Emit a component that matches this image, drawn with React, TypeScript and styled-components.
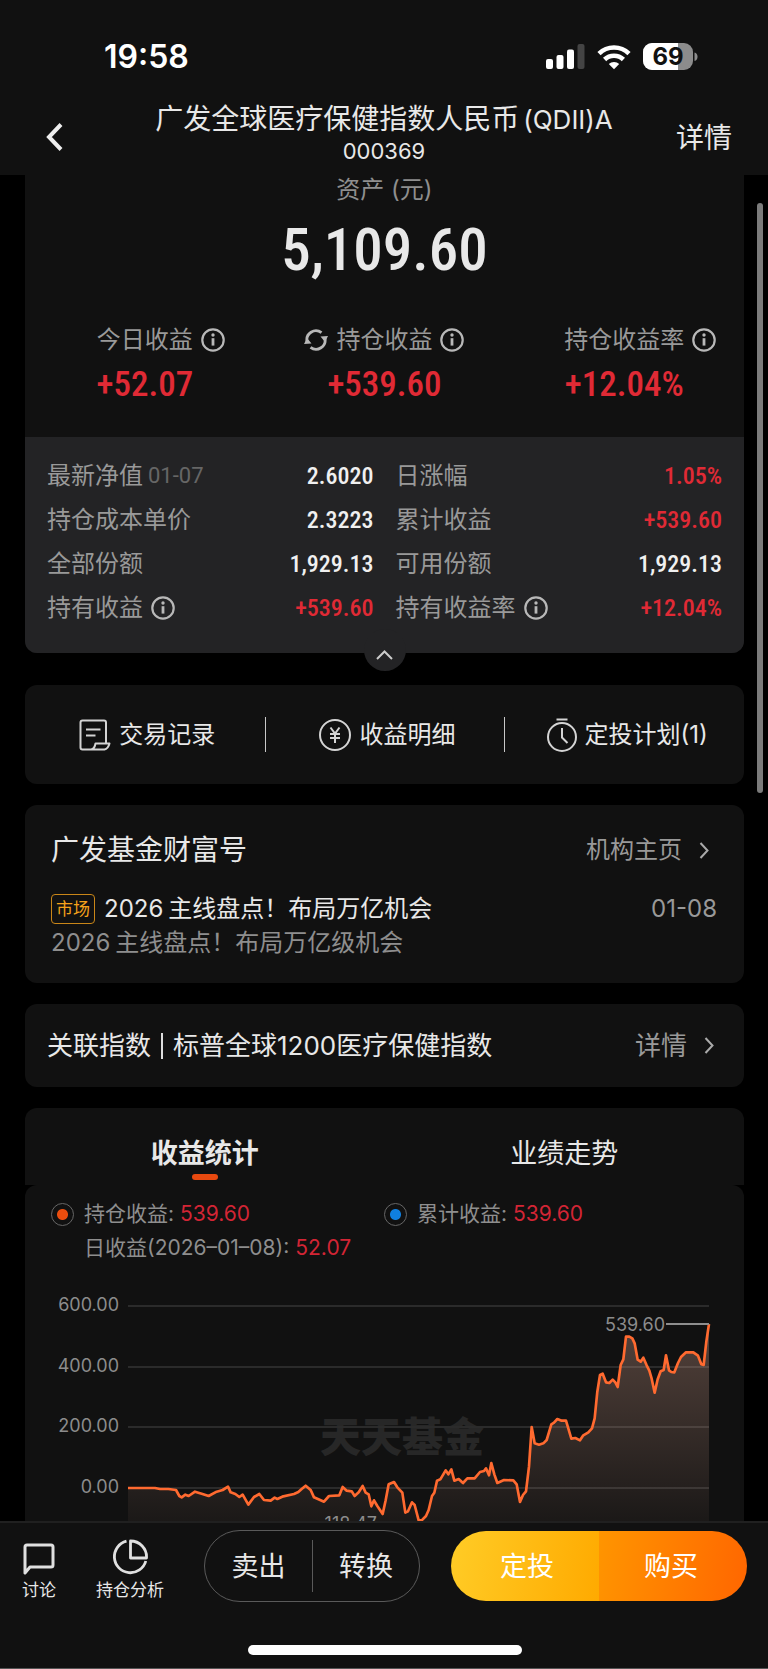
import React from "react";
import styled, { createGlobalStyle } from "styled-components";

const Global = createGlobalStyle`
  *, *::before, *::after { box-sizing: border-box; }
  body { margin: 0; background: #000; }
  button { font: inherit; color: inherit; background: none; border: 0; padding: 0; margin: 0; cursor: pointer; }
  a { color: inherit; text-decoration: none; }
  h1, h2, p, dl, dd, dt { margin: 0; font-weight: 400; }
  svg { display: block; flex: none; }
`;

const SANS = `Inter, "Noto Sans CJK SC", sans-serif`;
const DIN = `"Roboto Condensed", Roboto, "Noto Sans CJK SC", sans-serif`;

const Screen = styled.div`
  height: 100vh;
  display: flex;
  flex-direction: column;
  background: #000;
  color: #e8e8e8;
  font-family: ${SANS};
  font-size: 24px;
  line-height: 32px;
`;

const Header = styled.header`
  flex: none;
  background: #111;
`;

const StatusBar = styled.div`
  display: flex;
  align-items: center;
  justify-content: space-between;
  padding: 37px 70px 0 104px;
  height: 77px;
  color: #fff;
`;

const Clock = styled.time`
  font-size: 32px;
  font-weight: 600;
`;

const StatusIcons = styled.div`
  display: flex;
  align-items: center;
  gap: 12px;
`;

const NavBar = styled.div`
  display: grid;
  grid-template-columns: 120px 1fr 120px;
  align-items: center;
  height: 98px;
`;

const BackButton = styled.button`
  justify-self: start;
  padding: 22px 12px 0 46px;
`;

const NavTitle = styled.div`
  text-align: center;
  white-space: nowrap;
  display: flex;
  flex-direction: column;
  align-items: center;
  padding-top: 15px;
`;

const FundName = styled.h1`
  font-size: 28px;
  line-height: 34px;
`;

const FundClass = styled.span`
  font-size: 26px;
  margin-left: 4px;
`;

const FundCode = styled.p`
  font-size: 22px;
  line-height: 28px;
`;

const NavLink = styled.a`
  justify-self: end;
  padding: 24px 36px 0 0;
  font-size: 28px;
`;

const Main = styled.main`
  flex: 1;
  min-height: 0;
  position: relative;
  overflow: hidden;
`;

const Feed = styled.div`
  height: 100%;
  overflow-y: auto;
  scrollbar-width: none;
  padding: 0 24px 0 25px;
  display: flex;
  flex-direction: column;
`;

const ScrollThumb = styled.div`
  position: absolute;
  top: 28px;
  right: 5px;
  width: 6px;
  height: 590px;
  border-radius: 3px;
  background: #7b7b7b;
`;

const Card = styled.section`
  flex: none;
  background: #111;
  border-radius: 12px;
  margin-bottom: 21px;
`;

const AssetCard = styled(Card)`
  position: relative;
  border-radius: 0 0 12px 12px;
  margin-bottom: 32px;
`;

const AssetTop = styled.div`
  height: 262px;
  text-align: center;
`;

const AssetLabel = styled.p`
  color: #8e8e8e;
  line-height: 30px;
`;

const AssetValue = styled.p`
  font-family: ${DIN};
  font-weight: 500;
  font-size: 59px;
  line-height: 72px;
  padding-top: 9px;
  height: 110px;
`;

const Metrics = styled.dl`
  display: grid;
  grid-template-columns: repeat(3, 1fr);
  padding-top: 9px;
`;

const MetricLabel = styled.dt`
  display: grid;
  grid-template-columns: 32px auto 32px;
  justify-content: center;
  align-items: center;
  color: #999;
  white-space: nowrap;

  & > :last-child { justify-self: end; }
`;

const MetricValue = styled.dd`
  font-family: ${DIN};
  font-weight: 500;
  font-size: 35px;
  line-height: 40px;
  padding-top: 9px;
  color: #e02a35;
`;

const Details = styled.dl`
  display: grid;
  grid-template-columns: 1fr 1fr;
  column-gap: 22px;
  padding: 17px 22px 23px;
  background: #232325;
  border-radius: 0 0 12px 12px;
`;

const DetailRow = styled.div`
  display: flex;
  align-items: center;
  justify-content: space-between;
  height: 44px;
`;

const DetailLabel = styled.dt`
  display: flex;
  align-items: center;
  gap: 8px;
  color: #999;
`;

const DetailDate = styled.span`
  font-family: Roboto, sans-serif;
  font-size: 22px;
  color: #666;
  margin-left: -3px;
`;

const DetailValue = styled.dd<{ $up?: boolean }>`
  font-family: ${DIN};
  font-weight: 500;
  font-size: 24px;
  color: ${(p) => (p.$up ? "#e02a35" : "#f0f0f0")};
`;

const Collapse = styled.button`
  position: absolute;
  left: 50%;
  bottom: -18px;
  width: 42px;
  height: 42px;
  margin-left: -21px;
  padding-top: 10px;
  border-radius: 50%;
  background: #232325;
  display: flex;
  align-items: center;
  justify-content: center;
`;

const Actions = styled(Card)`
  display: grid;
  grid-template-columns: repeat(3, 1fr);
  align-items: center;
  height: 99px;
`;

const Action = styled.button`
  display: flex;
  align-items: center;
  justify-content: center;
  gap: 8px;
  height: 35px;
  padding-left: 5px;
  white-space: nowrap;

  & + & { border-left: 1px solid #c8c8c8; }
`;

const NewsCard = styled(Card)`
  height: 178px;
  padding: 25px 27px 0 26px;
`;

const Row = styled.div`
  display: flex;
  align-items: center;
  justify-content: space-between;
`;

const CardTitle = styled.h2`
  font-size: 28px;
  line-height: 40px;
`;

const MoreLink = styled.a<{ $large?: boolean }>`
  display: flex;
  align-items: center;
  gap: 17px;
  padding-right: 8px;
  font-size: ${(p) => (p.$large ? 26 : 24)}px;
  color: #999;
`;

const Headline = styled.a`
  display: flex;
  align-items: center;
`;

const Year = styled.span`
  margin-right: 5px;
`;

const Tag = styled.span`
  border: 1px solid #c98618;
  border-radius: 4px;
  color: #f5a21b;
  font-size: 17px;
  line-height: 28px;
  padding: 0 4px;
  margin-right: 9px;
`;

const NewsRow = styled(Row)`
  padding-top: 23px;
`;

const NewsDate = styled.time`
  color: #999;
`;

const Summary = styled.p`
  color: #8e8e8e;
  line-height: 36px;
`;

const IndexCard = styled(Card)`
  display: flex;
  align-items: center;
  justify-content: space-between;
  height: 83px;
  padding: 0 22px;
`;

const IndexName = styled.h2`
  display: flex;
  align-items: center;
  gap: 10px;
  font-size: 26px;
`;

const Bar = styled.span`
  width: 2px;
  height: 26px;
  background: #ddd;
`;

const ChartSection = styled.section`
  flex: none;
`;

const Tabs = styled.div`
  display: grid;
  grid-template-columns: 1fr 1fr;
  height: 77px;
  background: #111;
  border-radius: 12px 12px 0 0;
`;

const Tab = styled.button<{ $active?: boolean }>`
  display: flex;
  flex-direction: column;
  align-items: center;
  justify-content: flex-end;
  padding-bottom: 5px;
  font-size: 27px;
  line-height: 40px;
  font-weight: ${(p) => (p.$active ? 700 : 400)};

  &::after {
    content: "";
    width: 26px;
    height: 6px;
    border-radius: 3px;
    background: ${(p) => (p.$active ? "#e8490f" : "transparent")};
  }
`;

const ChartPanel = styled.div`
  background: #111;
  border-radius: 12px 12px 0 0;
`;

const Legend = styled.div`
  display: grid;
  grid-template-columns: 333px 1fr;
  padding: 12px 26px 5px;
  color: #8e8e8e;
  font-size: 21px;
  line-height: 34px;
`;

const LegendItem = styled.div`
  display: grid;
  grid-template-columns: 33px auto;
  align-items: center;
  align-content: start;
  justify-content: start;
  white-space: nowrap;

  & > p { grid-column: 2; }
`;

const Dot = styled.span<{ $color: string }>`
  width: 23px;
  height: 23px;
  border: 1px solid #666;
  border-radius: 50%;
  background: radial-gradient(circle, ${(p) => p.$color} 5px, transparent 6px);
`;

const Gain = styled.b`
  font-weight: 400;
  color: #d32535;
  margin-left: 6px;
`;

const Chart = styled.svg`
  width: 100%;
  height: auto;
  font-family: ${SANS};
  font-size: 18px;
`;

const Footer = styled.footer`
  flex: none;
  height: 148px;
  background: #111;
  border-top: 2px solid #202020;
  border-bottom: 1px solid #555;
  display: flex;
  flex-direction: column;
  align-items: center;
  justify-content: space-between;
  padding: 7px 21px 13px 22px;
`;

const FooterRow = styled.div`
  align-self: stretch;
  display: flex;
  align-items: center;
`;

const FooterTool = styled.button`
  display: flex;
  flex-direction: column;
  align-items: center;
  justify-content: flex-end;
  gap: 3px;
  height: 72px;
  font-size: 17px;
  line-height: 24px;
  margin-right: 40px;
  white-space: nowrap;
`;

const SellGroup = styled.div`
  flex: 215;
  display: grid;
  grid-template-columns: 1fr 1fr;
  align-items: center;
  height: 72px;
  border: 1px solid #5a5a5a;
  border-radius: 36px;
  font-size: 27px;
`;

const SellButton = styled.button`
  height: 52px;
  padding-top: 1px;
  & + & { border-left: 1px solid #5a5a5a; }
`;

const BuyGroup = styled.div`
  flex: 297;
  display: grid;
  grid-template-columns: 1fr 1fr;
  height: 70px;
  margin-left: 31px;
  border-radius: 35px;
  overflow: hidden;
  font-size: 27px;
  color: #fff;
`;

const BuyButton = styled.button<{ $from: string; $to: string }>`
  padding-top: 2px;
  background: linear-gradient(100deg, ${(p) => p.$from}, ${(p) => p.$to});

  &:first-child { padding-left: 4px; }
  &:last-child { padding-right: 4px; }
`;

const HomeIndicator = styled.div`
  width: 274px;
  height: 10px;
  border-radius: 5px;
  background: #fff;
`;

const InfoIcon = () => (
  <svg width="24" height="24" viewBox="0 0 24 24" fill="none" stroke="#b8b8b8" strokeWidth="2.2">
    <circle cx="12" cy="12" r="10.7" />
    <path d="M12 10.2v7.4" strokeWidth="2.8" />
    <circle cx="12" cy="7" r="1.7" fill="#b8b8b8" stroke="none" />
  </svg>
);

const RefreshIcon = () => (
  <svg width="24" height="24" viewBox="0 0 24 24" fill="none" stroke="#b8b8b8" strokeWidth="2.8">
    <path d="M3.2 14A9 9 0 0 1 17.500 4.700" />
    <path d="M20.800 10A9 9 0 0 1 6.500 19.300" />
    <path d="M0 16 3 10l4.500 5.500zM24 8 21 14l-4.500-5.500z" fill="#b8b8b8" stroke="none" />
  </svg>
);

const Chevron = () => (
  <svg width="10" height="17" viewBox="0 0 10 17" fill="none" stroke="#aaa" strokeWidth="2">
    <path d="M1.5 1 8.5 8.5 1.5 16" />
  </svg>
);

const CellularIcon = () => (
  <svg width="39" height="26" viewBox="0 0 39 26" fill="#fff">
    <rect x="0" y="15" width="7" height="10" rx="2" />
    <rect x="10.500" y="11" width="7" height="14" rx="2" />
    <rect x="21" y="5.500" width="7" height="19.500" rx="2" />
    <rect x="31.500" y="0" width="7" height="25" rx="2" fill="#444" />
  </svg>
);

const WifiIcon = () => (
  <svg width="34" height="26" viewBox="0 0 34 26" fill="none" stroke="#fff" strokeWidth="4.600">
    <path d="M2 9.600A21.500 21.500 0 0 1 32 9.600" />
    <path d="M7.600 15.500A13.500 13.500 0 0 1 26.400 15.500" />
    <path d="M17 25.300 11.800 20A7.500 7.500 0 0 1 22.200 20z" fill="#fff" stroke="none" />
  </svg>
);

const BatteryIcon = () => (
  <svg width="55" height="28" viewBox="0 0 55 28">
    <clipPath id="battery">
      <rect width="50" height="27" rx="9" />
    </clipPath>
    <g clipPath="url(#battery)">
      <rect width="50" height="27" fill="#8c8c8c" />
      <rect width="35" height="27" fill="#fff" />
    </g>
    <path d="M51.500 9.500c4 1 4 7.500 0 8.500z" fill="#8c8c8c" />
    <text x="25" y="22" textAnchor="middle" fontFamily="Inter" fontSize="24" fontWeight="700" fill="#111">69</text>
  </svg>
);

const RecordIcon = () => (
  <svg width="32" height="32" viewBox="0 0 32 32" fill="none" stroke="#d4d4d4" strokeWidth="2" strokeLinejoin="round">
    <path d="M27 24V3.500Q27 1.500 25 1.500H3.500Q1.500 1.500 1.500 3.500V28.500Q1.500 30.500 3.500 30.500H25.500Q29 30 30.500 24.500H16.500Q15.500 30 12 30.500" />
    <path d="M7 10.500H21.500M7 16.500H16.500" />
  </svg>
);

const YuanIcon = () => (
  <svg width="32" height="32" viewBox="0 0 32 32" fill="none" stroke="#d4d4d4" strokeWidth="2">
    <circle cx="16" cy="16" r="15" />
    <path d="M11.500 8.500 16 14.500l4.500-6M16 14.500v9.500M11 15h10M11 19h10" />
  </svg>
);

const TimerIcon = () => (
  <svg width="30" height="34" viewBox="0 0 30 34" fill="none" stroke="#d4d4d4" strokeWidth="2">
    <circle cx="15" cy="19" r="14" />
    <path d="M9.500 1.500h11M15 10v9.500l5.500 5.500" />
  </svg>
);

const metrics = [
  { label: "今日收益", value: "+52.07" },
  { label: "持仓收益", value: "+539.60", refresh: true },
  { label: "持仓收益率", value: "+12.04%" },
];

const details = [
  { label: "最新净值", date: "01-07", value: "2.6020" },
  { label: "日涨幅", value: "1.05%", up: true },
  { label: "持仓成本单价", value: "2.3223" },
  { label: "累计收益", value: "+539.60", up: true },
  { label: "全部份额", value: "1,929.13" },
  { label: "可用份额", value: "1,929.13" },
  { label: "持有收益", info: true, value: "+539.60", up: true },
  { label: "持有收益率", info: true, value: "+12.04%", up: true },
];

const actions = [
  { label: "交易记录", icon: <RecordIcon /> },
  { label: "收益明细", icon: <YuanIcon /> },
  { label: "定投计划(1)", icon: <TimerIcon /> },
];

const profitLine =
  "384,1194 465,1194 480,1197 505,1197 528,1200 538,1218 545,1222 556,1214 566,1218 585,1205 605,1211 626,1218 650,1205 668,1200 684,1190 692,1207 706,1212 718,1221 728,1214 745,1244 762,1221 778,1212 792,1230 812,1232 824,1223 832,1227 850,1219 882,1212 895,1206 905,1197 917,1187 932,1200 942,1222 972,1235 987,1218 1018,1216 1028,1191 1040,1202 1055,1204 1064,1218 1076,1207 1088,1188 1097,1208 1106,1213 1114,1249 1122,1231 1132,1248 1148,1272 1157,1231 1166,1183 1182,1176 1192,1192 1207,1208 1216,1268 1224,1264 1236,1237 1244,1245 1256,1291 1265,1291 1278,1278 1286,1260 1296,1218 1303,1208 1311,1172 1321,1168 1337,1141 1345,1153 1354,1138 1363,1172 1376,1167 1389,1179 1402,1165 1424,1165 1440,1146 1452,1143 1458,1135 1467,1156 1474,1119 1483,1153 1492,1179 1512,1170 1540,1171 1550,1183 1560,1236 1569,1215 1578,1204 1587,1130 1595,1011 1604,1060 1617,1064 1630,1060 1640,1050 1654,1003 1662,998 1672,987 1685,992 1698,992 1714,1046 1726,1044 1740,1051 1750,1036 1765,1027 1776,1015 1784,985 1792,905 1800,855 1808,851 1818,877 1828,879 1838,869 1846,877 1853,891 1862,825 1870,808 1878,740 1888,740 1897,745 1904,760 1913,809 1922,815 1930,803 1940,826 1948,842 1955,866 1964,908 1973,868 1982,844 1991,840 1998,796 2007,841 2014,846 2023,847 2034,819 2043,801 2058,787 2080,787 2094,797 2104,823 2111,825 2119,755 2127,702";

const gridLines = [
  { y: 36, label: "600.00" },
  { y: 97, label: "400.00" },
  { y: 157, label: "200.00" },
  { y: 218, label: "0.00" },
];

const ProfitChart = () => (
  <Chart viewBox="0 0 719 330" role="img" aria-label="收益统计">
    <defs>
      <linearGradient id="area" gradientUnits="userSpaceOnUse" x1="0" y1="702" x2="0" y2="1400">
        <stop offset="0" stopColor="#ffc0a8" stopOpacity="0.28" />
        <stop offset="1" stopColor="#ffc0a8" stopOpacity="0" />
      </linearGradient>
    </defs>
    <text x="377" y="182" textAnchor="middle" fontSize="41" fontWeight="900" fill="#272727">天天基金</text>
    {gridLines.map((g) => (
      <g key={g.label}>
        <path d={`M103 ${g.y}H684`} stroke="#2b2b2b" strokeWidth="2" />
        <text x="94" y={g.y + 5} textAnchor="end" fill="#8c8c8c">{g.label}</text>
      </g>
    ))}
    <g transform="scale(0.33333) translate(-75 -540)">
      <polygon points={`${profitLine} 2127,1400 384,1400`} fill="url(#area)" />
      <polyline points={profitLine} fill="none" stroke="#ff6a30" strokeWidth="8" strokeLinejoin="round" />
    </g>
    <path d="M641 54H684" stroke="#8e8e8e" strokeWidth="2" />
    <text x="640" y="61" textAnchor="end" fill="#8c8c8c">539.60</text>
    <text x="352" y="260" textAnchor="end" fill="#8c8c8c">-118.47</text>
  </Chart>
);

export default function App() {
  return (
    <Screen>
      <Global />
      <Header>
        <StatusBar>
          <Clock>19:58</Clock>
          <StatusIcons>
            <CellularIcon />
            <WifiIcon />
            <BatteryIcon />
          </StatusIcons>
        </StatusBar>
        <NavBar>
          <BackButton aria-label="返回">
            <svg width="17" height="28" viewBox="0 0 17 28" fill="none" stroke="#eee" strokeWidth="4">
              <path d="M15 1.500 3 14l12 12.500" />
            </svg>
          </BackButton>
          <NavTitle>
            <FundName>广发全球医疗保健指数人民币<FundClass>(QDII)A</FundClass></FundName>
            <FundCode>000369</FundCode>
          </NavTitle>
          <NavLink href="#detail">详情</NavLink>
        </NavBar>
      </Header>

      <Main>
        <Feed>
          <AssetCard>
            <AssetTop>
              <AssetLabel>资产 (元)</AssetLabel>
              <AssetValue>5,109.60</AssetValue>
              <Metrics>
                {metrics.map((m) => (
                  <div key={m.label}>
                    <MetricLabel>
                      <span>{m.refresh && <RefreshIcon />}</span>
                      {m.label}
                      <span><InfoIcon /></span>
                    </MetricLabel>
                    <MetricValue>{m.value}</MetricValue>
                  </div>
                ))}
              </Metrics>
            </AssetTop>
            <Details>
              {details.map((d) => (
                <DetailRow key={d.label}>
                  <DetailLabel>
                    {d.label}
                    {d.date && <DetailDate>{d.date}</DetailDate>}
                    {d.info && <InfoIcon />}
                  </DetailLabel>
                  <DetailValue $up={d.up}>{d.value}</DetailValue>
                </DetailRow>
              ))}
            </Details>
            <Collapse aria-label="收起">
              <svg width="17" height="10" viewBox="0 0 17 10" fill="none" stroke="#ccc" strokeWidth="2">
                <path d="M1 9 8.500 1.500 16 9" />
              </svg>
            </Collapse>
          </AssetCard>

          <Actions>
            {actions.map((a) => (
              <Action key={a.label}>
                {a.icon}
                {a.label}
              </Action>
            ))}
          </Actions>

          <NewsCard>
            <Row>
              <CardTitle>广发基金财富号</CardTitle>
              <MoreLink href="#org">机构主页 <Chevron /></MoreLink>
            </Row>
            <NewsRow>
              <Headline href="#news"><Tag>市场</Tag><Year>2026</Year>主线盘点！布局万亿机会</Headline>
              <NewsDate>01-08</NewsDate>
            </NewsRow>
            <Summary><Year>2026</Year>主线盘点！布局万亿级机会</Summary>
          </NewsCard>

          <IndexCard>
            <IndexName>关联指数<Bar />标普全球1200医疗保健指数</IndexName>
            <MoreLink href="#index" $large>详情 <Chevron /></MoreLink>
          </IndexCard>

          <ChartSection>
            <Tabs role="tablist">
              <Tab role="tab" aria-selected="true" $active>收益统计</Tab>
              <Tab role="tab" aria-selected="false">业绩走势</Tab>
            </Tabs>
            <ChartPanel>
              <Legend>
                <LegendItem>
                  <Dot $color="#ea4d0e" />
                  <p>持仓收益:<Gain>539.60</Gain></p>
                  <p>日收益(2026–01–08):<Gain>52.07</Gain></p>
                </LegendItem>
                <LegendItem>
                  <Dot $color="#0f7fe0" />
                  <p>累计收益:<Gain>539.60</Gain></p>
                </LegendItem>
              </Legend>
              <ProfitChart />
            </ChartPanel>
          </ChartSection>
        </Feed>
        <ScrollThumb />
      </Main>

      <Footer>
        <FooterRow>
          <FooterTool>
            <svg width="32" height="32" viewBox="0 0 32 32" fill="none" stroke="#e0e0e0" strokeWidth="3" strokeLinejoin="round">
              <path d="M2 30V4Q2 2 4 2H28Q30 2 30 4V22Q30 24 28 24H7z" />
            </svg>
            讨论
          </FooterTool>
          <FooterTool>
            <svg width="36" height="36" viewBox="0 0 36 36" fill="none" stroke="#e0e0e0" strokeWidth="2.800" strokeLinejoin="round">
              <path d="M14.500 2.200A16 16 0 1 0 33.800 22" />
              <path d="M18.500 2V19H34.500A16 16 0 0 0 18.500 2z" />
            </svg>
            持仓分析
          </FooterTool>
          <SellGroup>
            <SellButton>卖出</SellButton>
            <SellButton>转换</SellButton>
          </SellGroup>
          <BuyGroup>
            <BuyButton $from="#ffcc26" $to="#ffaa00">定投</BuyButton>
            <BuyButton $from="#ff9500" $to="#ff6600">购买</BuyButton>
          </BuyGroup>
        </FooterRow>
        <HomeIndicator />
      </Footer>
    </Screen>
  );
}
